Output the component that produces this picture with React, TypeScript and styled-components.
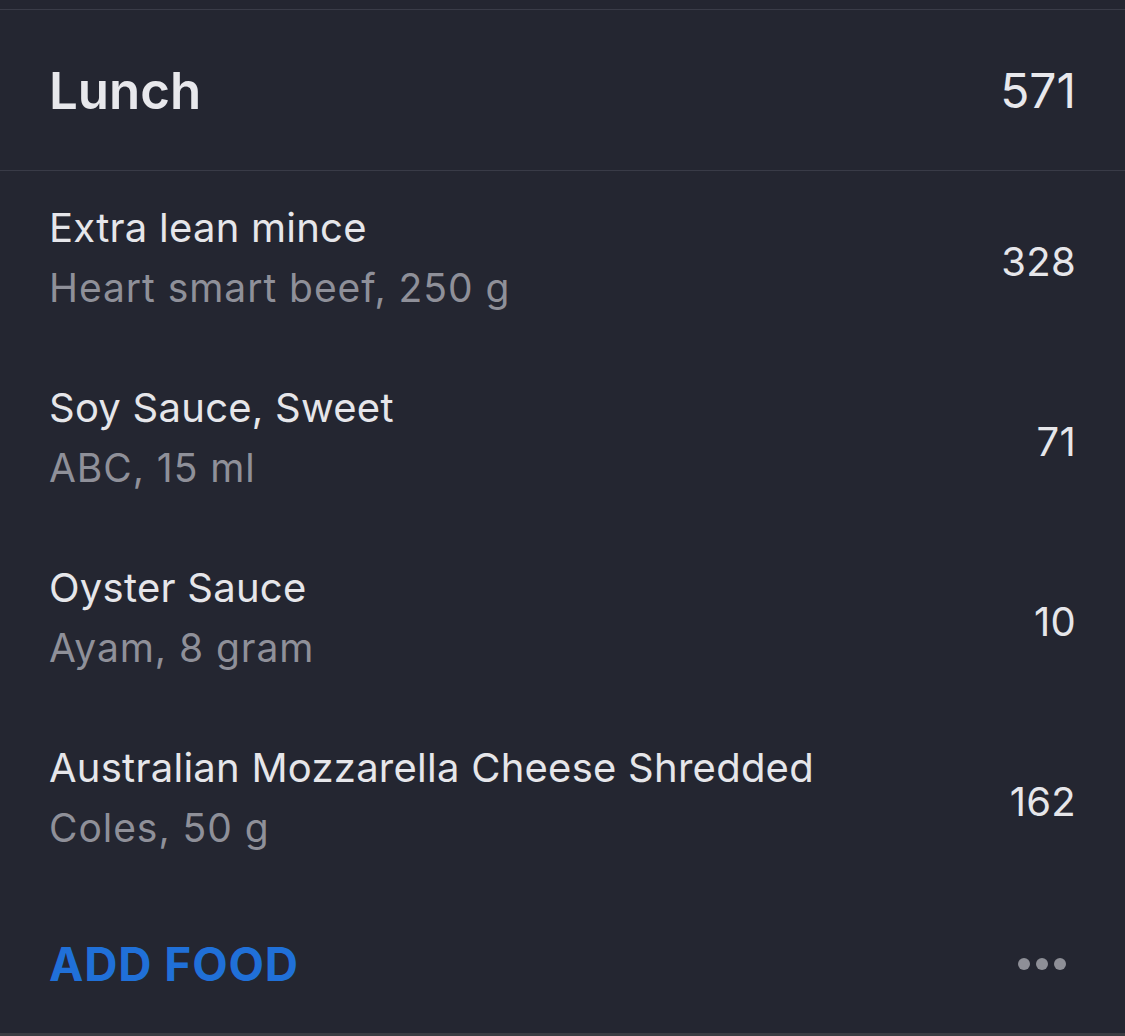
import React from "react";
import styled, { createGlobalStyle } from "styled-components";

const Global = createGlobalStyle`
  html, body { margin: 0; padding: 0; background: #242631; }
  body { font-family: Inter, "Noto Sans", sans-serif; -webkit-font-smoothing: antialiased; }
`;

const Page = styled.div`
  width: 1125px;
  height: 1036px;
  background: #242631;
  padding-top: 9px;
  box-sizing: border-box;
  display: flex;
  flex-direction: column;
  overflow: hidden;
`;

const Card = styled.section`
  border-top: 1px solid #3a3c48;
  border-bottom: 3px solid #3b3c42;
  display: flex;
  flex-direction: column;
  flex: 1;
`;

const Header = styled.header`
  height: 161px;
  box-sizing: border-box;
  display: flex;
  align-items: center;
  justify-content: space-between;
  padding: 0 49px 0 49px;
  border-bottom: 1px solid #393b47;
`;

const Title = styled.h2`
  margin: 0;
  font-size: 51px;
  font-weight: 600;
  color: #e8e8ec;
  letter-spacing: 0;
`;

const Total = styled.span`
  font-size: 48px;
  font-weight: 400;
  color: #e8e8ec;
`;

const Row = styled.div`
  height: 180px;
  box-sizing: border-box;
  display: flex;
  align-items: center;
  justify-content: space-between;
  padding: 0 49px;
`;

const Info = styled.div`
  display: flex;
  flex-direction: column;
  gap: 14px;
  margin-bottom: 6px;
`;

const Name = styled.div`
  font-size: 40px;
  line-height: 46px;
  letter-spacing: 0.25px;
  color: #e6e6ea;
`;

const Sub = styled.div`
  font-size: 39px;
  line-height: 46px;
  letter-spacing: 0.95px;
  color: #8f9099;
`;

const Cals = styled.span`
  font-size: 40px;
  letter-spacing: 0.3px;
  color: #e6e6ea;
`;

const Footer = styled.footer`
  flex: 1;
  display: flex;
  align-items: center;
  justify-content: space-between;
  padding: 4px 49px 0;
`;

const AddFood = styled.button`
  background: none;
  border: none;
  padding: 0;
  font-family: inherit;
  font-size: 46px;
  font-weight: 700;
  letter-spacing: 0.9px;
  color: #2070d8;
  cursor: pointer;
`;

const More = styled.div`
  display: flex;
  gap: 6px;
  margin-right: 10px;
`;

const Dot = styled.span`
  width: 12px;
  height: 12px;
  border-radius: 50%;
  background: #8e8f97;
`;

const items = [
  { name: "Extra lean mince", sub: "Heart smart beef, 250 g", cals: 328 },
  { name: "Soy Sauce, Sweet", sub: "ABC, 15 ml", cals: 71 },
  { name: "Oyster Sauce", sub: "Ayam, 8 gram", cals: 10 },
  { name: "Australian Mozzarella Cheese Shredded", sub: "Coles, 50 g", cals: 162 },
];

export default function App() {
  return (
    <>
      <Global />
      <Page>
        <Card>
          <Header>
            <Title>Lunch</Title>
            <Total>571</Total>
          </Header>
          {items.map((it) => (
            <Row key={it.name}>
              <Info>
                <Name>{it.name}</Name>
                <Sub>{it.sub}</Sub>
              </Info>
              <Cals>{it.cals}</Cals>
            </Row>
          ))}
          <Footer>
            <AddFood>ADD FOOD</AddFood>
            <More>
              <Dot />
              <Dot />
              <Dot />
            </More>
          </Footer>
        </Card>
      </Page>
    </>
  );
}
